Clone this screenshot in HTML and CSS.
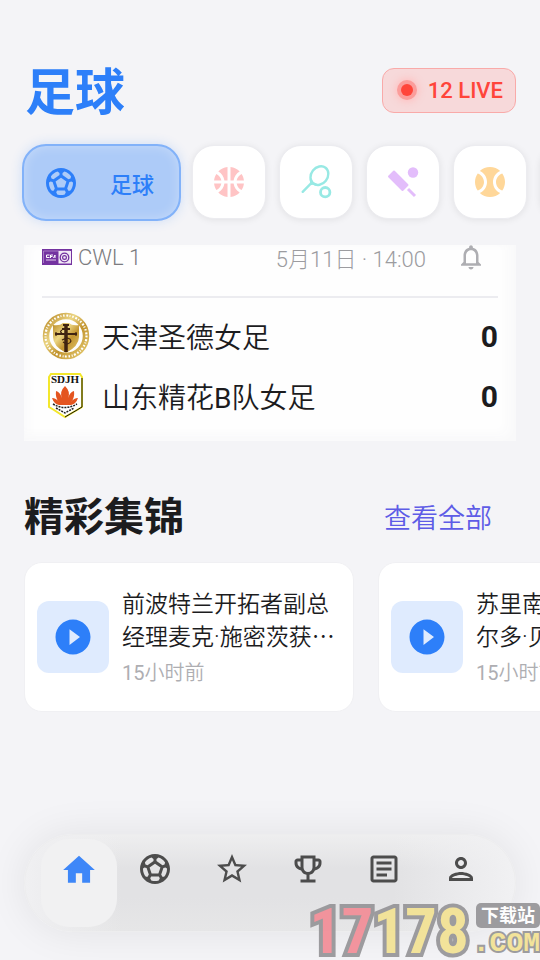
FILE: index.html
```html
<!DOCTYPE html>
<html lang="zh-CN">
<head>
<meta charset="utf-8">
<meta name="viewport" content="width=device-width, initial-scale=1">
<title>足球</title>
<link rel="stylesheet" href="styles.css">
</head>
<body>
<svg width="0" height="0" class="defs" aria-hidden="true">
  <defs>
    <linearGradient id="gold" x1="0" y1="0" x2="1" y2="1"><stop offset="0" stop-color="#b98a26"/><stop offset=".35" stop-color="#ecd685"/><stop offset=".6" stop-color="#c2942f"/><stop offset="1" stop-color="#e6cc72"/></linearGradient>
    <symbol id="soccer" viewBox="0 0 24 24"><path d="M12 2C6.48 2 2 6.48 2 12s4.48 10 10 10 10-4.48 10-10S17.52 2 12 2zm1 3.3l1.35-.95c1.82.56 3.37 1.76 4.38 3.34l-.39 1.34-1.35.46L13 6.7V5.3zm-3.35-.95L11 5.3v1.4L7.01 9.49l-1.35-.46-.39-1.34c1.01-1.57 2.56-2.77 4.38-3.34zM7.08 17.11l-1.14.1C4.73 15.81 4 13.99 4 12c0-.12.01-.23.02-.35l1-.73 1.38.48 1.46 4.34-.78 1.37zm7.42 2.48c-.79.26-1.63.41-2.5.41s-1.71-.15-2.5-.41l-.69-1.49.64-1.1h5.11l.64 1.11-.7 1.48zM14.27 15H9.73l-1.35-4.02L12 8.44l3.63 2.54L14.27 15zm3.79 2.21l-1.14-.1-.78-1.37 1.46-4.34 1.39-.47 1 .73c.01.11.01.22.01.34 0 1.99-.73 3.81-1.94 5.21z"/></symbol>
    <symbol id="play" viewBox="0 0 24 24"><path d="M12 2C6.48 2 2 6.48 2 12s4.48 10 10 10 10-4.48 10-10S17.52 2 12 2zm-2 14.5v-9l6 4.5-6 4.5z"/></symbol>
  </defs>
</svg>
<div class="app">
  <header class="header">
    <h1>足球</h1>
    <button class="live" type="button"><span class="live-dot"></span>12 LIVE</button>
  </header>

  <div class="sports">
    <button class="sport sport-active" type="button"><svg class="icon"><use href="#soccer"/></svg><span>足球</span></button>
    <button class="sport basketball" type="button" aria-label="篮球"><svg class="icon" viewBox="0 0 24 24"><path d="M17.09 11h4.86c-.16-1.61-.71-3.11-1.54-4.4-1.73.83-2.99 2.45-3.32 4.4zM6.91 11C6.58 9.05 5.32 7.43 3.59 6.6 2.76 7.89 2.21 9.39 2.05 11h4.86zM15.07 11c.32-2.59 1.88-4.79 4.06-6-1.6-1.63-3.74-2.71-6.13-2.95V11h2.07zM8.93 11H11V2.05C8.61 2.29 6.46 3.37 4.87 5c2.18 1.21 3.74 3.41 4.06 6zM15.07 13H13v8.95c2.39-.24 4.54-1.32 6.13-2.95-2.18-1.21-3.74-3.41-4.06-6zM3.59 17.4c1.73-.83 2.99-2.45 3.32-4.4H2.05c.16 1.61.71 3.11 1.54 4.4zM17.09 13c.33 1.95 1.59 3.57 3.32 4.4.83-1.29 1.38-2.79 1.54-4.4h-4.86zM8.93 13c-.32 2.59-1.88 4.79-4.06 6 1.6 1.63 3.74 2.71 6.13 2.95V13H8.93z"/></svg></button>
    <button class="sport tennis" type="button" aria-label="网球"><svg class="icon" viewBox="0 0 36 36"><g fill="none" stroke="currentColor" stroke-width="2.4"><ellipse cx="21.4" cy="11.6" rx="8.2" ry="10" transform="rotate(38 21.4 11.6)"/><path d="M13 16q1 3-1 4.500l-7.300 7.300M12 20.500q2-2 6 0" stroke-linecap="round"/><circle cx="27.200" cy="28.200" r="4.700" stroke-width="2.800"/></g></svg></button>
    <button class="sport cricket" type="button" aria-label="板球"><svg class="icon" viewBox="0 0 36 36"><path d="M9 7.500 22.500 21 17.500 26 4 12.500z" stroke="currentColor" stroke-width="2" stroke-linejoin="round"/><path d="m23 25 7 7" stroke="currentColor" stroke-width="3"/><circle cx="28" cy="8.500" r="5.200"/></svg></button>
    <button class="sport baseball" type="button" aria-label="棒球"><svg class="icon" viewBox="0 0 24 24"><path d="M3.81 6.28C2.67 7.9 2 9.87 2 12s.67 4.1 1.81 5.72C6.23 16.95 8 14.68 8 12S6.23 7.05 3.81 6.28zM20.19 6.28C17.77 7.05 16 9.32 16 12s1.77 4.95 4.19 5.72C21.33 16.1 22 14.13 22 12s-.67-4.1-1.81-5.72zM14 12c0-3.28 1.97-6.09 4.79-7.33C17.01 3.02 14.63 2 12 2S6.99 3.02 5.21 4.67C8.03 5.91 10 8.72 10 12s-1.97 6.09-4.79 7.33C6.99 20.98 9.37 22 12 22s5.01-1.02 6.79-2.67C15.97 18.09 14 15.28 14 12z"/></svg></button>
    <button class="sport" type="button" aria-label="更多"></button>
  </div>

  <article class="match">
    <div class="match-head">
      <svg class="league" viewBox="0 0 30 16"><path fill="#7433a0" d="M0 0h30v16H0z"/><path d="M1.500 14V2H28" fill="none" stroke="#c9addb" stroke-width=".6"/><path fill="#f2eaf6" d="M16.500 2H29v12.500H16.500z"/><path d="M7.500 6H4.500v2.500h3M8.500 9V6h2.500M8.500 7.500h2M11.500 9l1.500-3v3" stroke="#fff" fill="none"/><path d="M4 11h10" stroke="#e3d0ee"/><circle cx="22.500" cy="8.500" r="4.300" fill="none" stroke="#7433a0" stroke-width="1.300"/><circle cx="22.500" cy="8.500" r="1.900" fill="none" stroke="#7433a0" stroke-width="1.200"/></svg>
      <span class="league-name">CWL 1</span>
      <time class="kickoff">5月11日 · 14:00</time>
      <button class="bell" type="button" aria-label="提醒"><svg viewBox="0 0 24 24"><path d="M12 22c1.100 0 2-.9 2-2h-4c0 1.100.9 2 2 2zm6-6v-5c0-3.070-1.630-5.640-4.500-6.320V4c0-.83-.67-1.500-1.500-1.500s-1.500.67-1.500 1.500v.68C7.640 5.360 6 7.920 6 11v5l-2 2v1h16v-1l-2-2zm-2 1H8v-6c0-2.480 1.510-4.500 4-4.500s4 2.020 4 4.500v6z"/></svg></button>
    </div>
    <div class="team">
      <svg class="crest" viewBox="0 0 48 48"><circle cx="24" cy="24" r="20" fill="none" stroke="url(#gold)" stroke-width="6.500"/><circle cx="24" cy="24" r="20.500" fill="none" stroke="#fff" stroke-width="2.200" stroke-dasharray="1.500 1.800 2 1.300 1 1.700"/><path d="M11 13q7 1 10-2h6q3 3 10 2v12q0 9-13 16Q11 34 11 25z" fill="url(#gold)"/><path d="M24 12v28" stroke="#402411" stroke-width="3.500"/><path d="M13 22h22M21 13h6M20 17h8" stroke="#402411" stroke-width="2.200"/><path d="M14 20v4M34 20v4M20 28q8-4 9 1-2 5-8 1M20 18q-3 2 0 3" stroke="#402411" stroke-width="1.200" fill="none"/></svg>
      <span class="team-name">天津圣德女足</span><strong>0</strong>
    </div>
    <div class="team">
      <svg class="crest" viewBox="0 0 48 48"><path d="M9 2h29l2 3v30l-5 3-12 7-11-7-5-3V5z" fill="#fff" stroke="#f3e72c" stroke-width="2"/><path d="M40 6v29l-5 3-12 7" fill="none" stroke="#111"/><text x="23" y="11" text-anchor="middle" class="crest-text">SDJH</text><path d="M23 14q6 6 3 12 2-6 6-7 1 7-3 11 3-4 7-4-2 6-7 7H17q-5-1-7-7 4 0 7 4-4-4-3-11 4 1 6 7-3-6 3-12z" fill="#e45520"/><path d="M11 32q12 7 24 0M14 36l9 5 9-5" fill="none" stroke="#222" stroke-width="1.500" stroke-dasharray="2 1"/></svg>
      <span class="team-name">山东精花<span class="latin">B</span>队女足</span><strong>0</strong>
    </div>
  </article>

  <section class="highlights">
    <div class="section-head"><h2>精彩集锦</h2><a href="#all">查看全部</a></div>
    <div class="cards">
      <article class="card">
        <button class="thumb" type="button" aria-label="播放"><svg><use href="#play"/></svg></button>
        <div class="card-body"><h3>前波特兰开拓者副总<br>经理麦克·施密茨获⋯</h3><time><span class="latin">15</span>小时前</time></div>
      </article>
      <article class="card">
        <button class="thumb" type="button" aria-label="播放"><svg><use href="#play"/></svg></button>
        <div class="card-body"><h3>苏里南<br>尔多·贝</h3><time><span class="latin">15</span>小时前</time></div>
      </article>
    </div>
  </section>

  <nav class="nav">
    <a class="nav-item nav-active" href="#home" aria-label="首页"><svg viewBox="0 0 24 24"><path d="M10 20v-6h4v6h5v-8h3L12 3 2 12h3v8z"/></svg></a>
    <a class="nav-item" href="#games" aria-label="比赛"><svg><use href="#soccer"/></svg></a>
    <a class="nav-item" href="#favorites" aria-label="收藏"><svg viewBox="0 0 24 24"><path d="M22 9.240l-7.190-.62L12 2 9.190 8.630 2 9.240l5.460 4.730L5.820 21 12 17.270 18.180 21l-1.630-7.030L22 9.240zM12 15.400l-3.760 2.270 1-4.280-3.320-2.880 4.380-.38L12 6.100l1.710 4.040 4.380.38-3.320 2.880 1 4.280L12 15.400z"/></svg></a>
    <a class="nav-item" href="#leagues" aria-label="联赛"><svg viewBox="0 0 24 24"><path d="M19 5h-2V3H7v2H5c-1.100 0-2 .9-2 2v1c0 2.550 1.920 4.630 4.390 4.940.63 1.500 1.980 2.630 3.610 2.960V19H7v2h10v-2h-4v-3.100c1.630-.33 2.980-1.460 3.610-2.960C19.080 12.630 21 10.550 21 8V7c0-1.100-.9-2-2-2zM5 8V7h2v3.820C5.840 10.400 5 9.300 5 8zm7 6c-1.650 0-3-1.350-3-3V5h6v6c0 1.650-1.350 3-3 3zm7-6c0 1.300-.84 2.400-2 2.820V7h2v1z"/></svg></a>
    <a class="nav-item" href="#news" aria-label="新闻"><svg viewBox="0 0 24 24"><path d="M19 5v14H5V5h14m0-2H5c-1.100 0-2 .9-2 2v14c0 1.100.9 2 2 2h14c1.100 0 2-.9 2-2V5c0-1.100-.9-2-2-2zM14 17H7v-2h7v2zm3-4H7v-2h10v2zm0-4H7V7h10v2z"/></svg></a>
    <a class="nav-item" href="#me" aria-label="我的"><svg viewBox="0 0 24 24"><path d="M12 6c1.100 0 2 .9 2 2s-.9 2-2 2-2-.9-2-2 .9-2 2-2m0 10c2.700 0 5.800 1.290 6 2H6c.23-.72 3.310-2 6-2m0-12C9.790 4 8 5.790 8 8s1.790 4 4 4 4-1.790 4-4-1.790-4-4-4zm0 10c-2.670 0-8 1.340-8 4v2h16v-2c0-2.660-5.330-4-8-4z"/></svg></a>
  </nav>

  <div class="mark">
    <span class="mark-num"><span class="mark-red">17</span>178</span>
    <span class="mark-side"><span class="mark-tag">下载站</span><span class="mark-com">.COM</span></span>
  </div>
</div>
</body>
</html>
```
FILE: styles.css
```css
* { box-sizing: border-box; }
body {
  margin: 0;
  background: #f4f4f7;
  color: #1c1c1e;
  font-family: Roboto, "Noto Sans CJK SC", sans-serif;
}
button { border: 0; padding: 0; font: inherit; color: inherit; background: none; }
svg { display: block; fill: currentColor; }
h1, h2, h3 { margin: 0; }
a { text-decoration: none; color: inherit; }
.defs { position: absolute; }
.latin { font-weight: 400; }
.app {
  position: relative;
  min-height: 100vh;
  padding-top: 56px;
  overflow: hidden;
  display: flex;
  flex-direction: column;
}
.header { display: flex; align-items: center; justify-content: space-between; padding: 0 24px 0 25px; height: 72px; }
h1 { padding-top: 2px; color: #2d7ff9; font-size: 50px; line-height: 72px; font-weight: 600; }
.live {
  display: flex; align-items: center; gap: 15px;
  height: 45px; padding: 0 12px 0 18px; margin-top: -4px;
  border: 1px solid #f9aaa9; border-radius: 12px;
  background: #f7d9da; color: #ff453a;
  font-size: 22px; font-weight: 500;
}
.live-dot { width: 12px; height: 12px; border-radius: 50%; background: #ff453a; box-shadow: 0 0 0 4px #fb9d9b, 0 0 8px 5px #fbb; }

.sports { display: flex; gap: 13px; padding: 16px 22px; overflow: hidden; }
.sport {
  flex: none; width: 74px; height: 74px; margin-top: 1px;
  display: flex; align-items: center; justify-content: center;
  border: 1px solid #ececf0; border-radius: 22px; background: #fff;
  box-shadow: 0 1px 7px #00000014;
}
.sport-active {
  width: 159px; height: 77px; margin: 0 -2px 0 0; padding: 0 25px 0 19px; justify-content: space-between;
  border: 2px solid #82b2f9; border-radius: 24px;
  background: #adcbf8; color: #2d7ff9;
  box-shadow: 0 0 12px #2d7ff930, inset 0 0 12px #ffffff50;
  font-size: 22px; font-weight: 500;
}
.icon { width: 36px; height: 36px; }
.basketball { color: #ffc4c5; }
.tennis { color: #98e9e4; }
.cricket { color: #e3bdfb; }
.baseball { color: #ffd799; }

.match {
  margin: 8px 24px 0; padding: 0 18px 14px; height: 196px;
  background: #fefefe; box-shadow: inset -8px -6px 12px #f9f9fa, inset 5px 0 10px #fafafb;
}
.match-head { display: flex; align-items: center; height: 53px; padding-bottom: 27px; border-bottom: 2px solid #ececf0; font-size: 22px; font-weight: 300; }
.league { width: 30px; height: 16px; margin-right: 6px; }
.league-name { color: #7c7c80; }
.kickoff { margin-left: auto; color: #9c9ca0; }
.bell { color: #aeaeb2; margin: 0 12px 0 30px; }
.bell svg { width: 30px; height: 30px; }
.team { display: flex; align-items: center; gap: 12px; height: 60px; }
.match-head + .team { margin-top: 8px; }
.crest { width: 48px; height: 48px; }
.crest-text { font: bold 11px "Liberation Serif", serif; fill: #111; }
.team-name { font-size: 28px; font-weight: 350; }
.team strong { margin-left: auto; font-size: 30px; font-weight: 700; }

.section-head { display: flex; align-items: center; justify-content: space-between; height: 60px; margin-top: 45px; padding: 0 48px 0 24px; }
h2 { padding-top: 4px; font-size: 40px; line-height: 56px; font-weight: 600; }
.section-head a { color: #5e5ce6; font-size: 27px; font-weight: 350; }
.cards { display: flex; gap: 24px; margin-top: 16px; padding-left: 24px; overflow: hidden; }
.card {
  flex: none; width: 330px; height: 150px; padding: 0 12px;
  display: flex; align-items: center; gap: 13px;
  background: #fff; border: 1px solid #f0f0f3; border-radius: 18px;
}
.thumb { flex: none; width: 72px; height: 72px; display: grid; place-items: center; border-radius: 12px; background: #dfebfe; color: #2d7ff9; }
.thumb svg { width: 42px; height: 42px; }
.card-body { white-space: nowrap; }
h3 { padding-top: 2px; font-size: 23px; line-height: 33px; font-weight: 350; }
.card time { display: block; margin-top: 4px; color: #aeaeb2; font-size: 20px; line-height: 30px; font-weight: 350; }

.nav {
  display: flex; margin: auto 24px 28px; padding: 4px 16px; height: 98px;
  border: 1px solid #ededee; border-radius: 49px;
  background:
    linear-gradient(90deg, #f0f0f2, #f0f0f200 20%, #f0f0f200 75%, #f1f1f3),
    linear-gradient(#eeeeef, #e2e2e4 35%, #e2e2e4 65%, #e6e6e7);
  box-shadow: 0 0 40px #00000014;
  color: #4c4c4c;
}
.nav-item { flex: 1; display: flex; justify-content: center; padding-top: 12px; border-radius: 28px; }
.nav-item svg { width: 36px; height: 36px; }
.nav-active { background: #f1f1f2; color: #3e87f8; }
.nav-active svg { width: 38px; height: 38px; }

.mark { position: absolute; right: 0; bottom: 0; display: flex; align-items: flex-end; gap: 4px; opacity: .9; }
.mark-num {
  font: bold 63px/56px "Roboto Condensed", "Liberation Sans Narrow", Roboto, sans-serif;
  color: #f3e291; -webkit-text-stroke: 8px #949396; paint-order: stroke fill;
}
.mark-red { color: #f38b95; }
.mark-side { display: flex; flex-direction: column; align-items: flex-end; }
.mark-tag { padding: 0 5px; border-radius: 5px; background: #949396; color: #fff; font-size: 18px; line-height: 25px; font-weight: 700; }
.mark-com { font: bold 28px/32px "Liberation Mono", monospace; color: #f3e291; -webkit-text-stroke: 4px #949396; paint-order: stroke fill; }
```
